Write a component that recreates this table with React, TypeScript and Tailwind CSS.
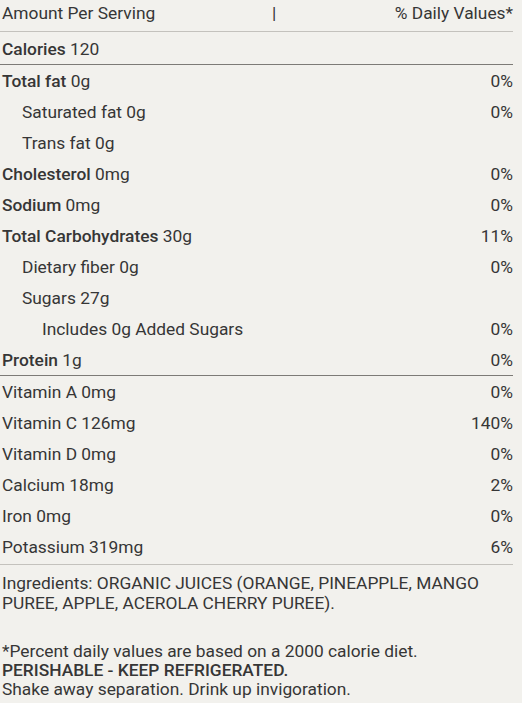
import React from "react";

type Row = {
  label: string;
  amount: string;
  dv?: string;
  bold?: boolean;
  indent?: 0 | 1 | 2;
};

const nutrients: Row[] = [
  { label: "Total fat", amount: "0g", dv: "0%", bold: true },
  { label: "Saturated fat", amount: "0g", dv: "0%", indent: 1 },
  { label: "Trans fat", amount: "0g", indent: 1 },
  { label: "Cholesterol", amount: "0mg", dv: "0%", bold: true },
  { label: "Sodium", amount: "0mg", dv: "0%", bold: true },
  { label: "Total Carbohydrates", amount: "30g", dv: "11%", bold: true },
  { label: "Dietary fiber", amount: "0g", dv: "0%", indent: 1 },
  { label: "Sugars", amount: "27g", indent: 1 },
  { label: "Includes 0g Added Sugars", amount: "", dv: "0%", indent: 2 },
  { label: "Protein", amount: "1g", dv: "0%", bold: true },
];

const vitamins: Row[] = [
  { label: "Vitamin A", amount: "0mg", dv: "0%" },
  { label: "Vitamin C", amount: "126mg", dv: "140%" },
  { label: "Vitamin D", amount: "0mg", dv: "0%" },
  { label: "Calcium", amount: "18mg", dv: "2%" },
  { label: "Iron", amount: "0mg", dv: "0%" },
  { label: "Potassium", amount: "319mg", dv: "6%" },
];

const indentClass = ["pl-[2px]", "pl-[22px]", "pl-[42px]"];

const NutrientRow: React.FC<{ row: Row }> = ({ row }) => (
  <div className="flex h-[31px] items-center justify-between pt-[1px]">
    <span className={indentClass[row.indent ?? 0]}>
      {row.bold ? <span className="font-medium">{row.label}</span> : row.label}
      {row.amount && ` ${row.amount}`}
    </span>
    <span>{row.dv}</span>
  </div>
);

export default function App() {
  return (
    <div
      className="min-h-[703px] w-full bg-[#f2f1ed] text-[17.35px] leading-5 text-[#363636]"
      style={{ fontFamily: "Roboto, Arial, sans-serif" }}
    >
      <div className="w-[513px]">
        {/* Header */}
        <div className="flex h-[32px] items-center border-b border-[#c4c2bd] pb-[6px]">
          <span className="w-[272px] pl-[2px]">Amount Per Serving</span>
          <span>|</span>
          <span className="ml-auto">% Daily Values*</span>
        </div>

        <div className="flex h-[33px] items-center border-b border-[#7d7b77] pl-[2px] pt-[2px]">
          <span className="font-medium">Calories</span>&nbsp;120
        </div>

        <div className="border-b border-[#7d7b77]">
          {nutrients.map((row, i) => (
            <NutrientRow key={i} row={row} />
          ))}
        </div>

        <div className="border-b border-[#c4c2bd] pb-[2px]">
          {vitamins.map((row, i) => (
            <NutrientRow key={i} row={row} />
          ))}
        </div>

        {/* Footer */}
        <div className="pl-[2px] pt-[8px]">
          <p>
            Ingredients: ORGANIC JUICES (ORANGE, PINEAPPLE, MANGO PUREE, APPLE, ACEROLA CHERRY PUREE).
          </p>
          <div className="mt-[29px] leading-[19px]">
            <p>*Percent daily values are based on a 2000 calorie diet.</p>
            <p className="font-medium">PERISHABLE - KEEP REFRIGERATED.</p>
            <p>Shake away separation. Drink up invigoration.</p>
          </div>
        </div>
      </div>
    </div>
  );
}
